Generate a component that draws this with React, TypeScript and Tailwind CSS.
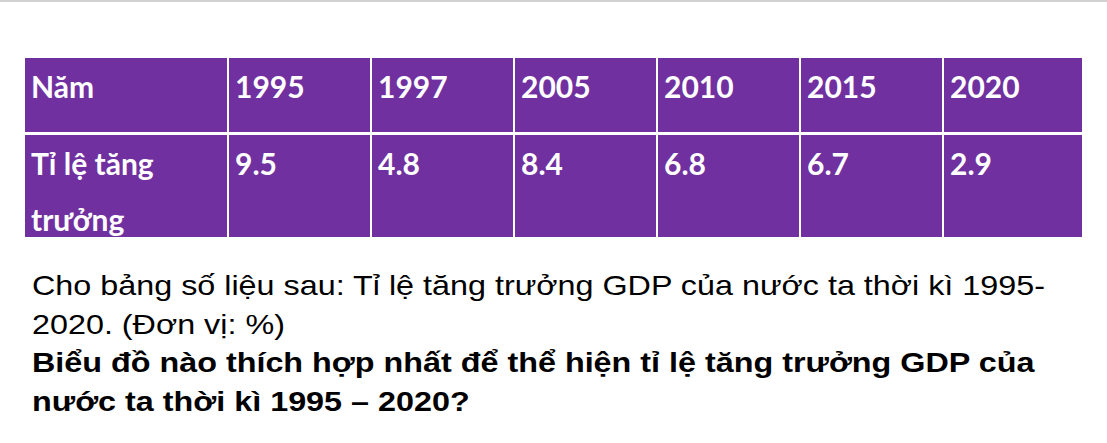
import React from "react";

const years = ["1995", "1997", "2005", "2010", "2015", "2020"];
const values = ["9.5", "4.8", "8.4", "6.8", "6.7", "2.9"];

export default function App() {
  const cell = "bg-[#7030a0] text-white font-bold pl-[6px] text-[30px] leading-[56px]";
  return (
    <div className="w-[1107px] h-[443px] bg-white overflow-hidden">
      <div className="h-[2px] bg-[#d2d2d2]" />
      <div className="pl-[25px] pt-[56px]">
        <div
          className="grid grid-cols-[202px_141px_141px_141px_141px_141px_138px] grid-rows-[74px_102px] gap-x-[2px] gap-y-[3px] w-[1057px]"
          style={{ fontFamily: "Lato, 'Noto Sans', sans-serif" }}
        >
          <div className={cell}>Năm</div>
          {years.map((y) => (
            <div key={y} className={cell}>
              {y}
            </div>
          ))}
          <div className={cell}>
            Tỉ lệ tăng
            <br />
            trưởng
          </div>
          {values.map((v, i) => (
            <div key={i} className={cell}>
              {v}
            </div>
          ))}
        </div>
      </div>
      <div
        className="pl-[32px] pt-[29px] text-black text-[28.5px] leading-[38.5px] whitespace-nowrap"
        style={{ fontFamily: "'Liberation Sans', Arial, sans-serif" }}
      >
        <div className="origin-left scale-x-[1.134] w-fit">
          <p>
            Cho bảng số liệu sau: Tỉ lệ tăng trưởng GDP của nước ta thời kì 1995-
            <br />
            2020. (Đơn vị: %)
          </p>
          <p className="font-bold">
            Biểu đồ nào thích hợp nhất để thể hiện tỉ lệ tăng trưởng GDP của
            <br />
            nước ta thời kì 1995 – 2020?
          </p>
        </div>
      </div>
    </div>
  );
}
